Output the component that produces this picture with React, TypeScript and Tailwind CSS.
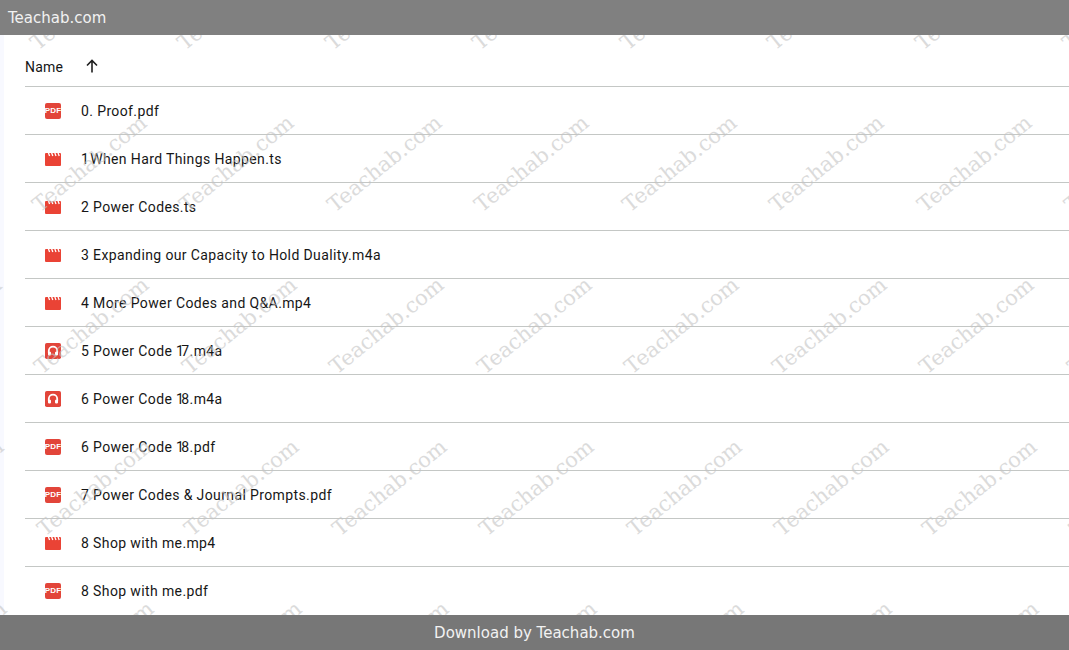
import React from "react";

const files: [string, "pdf" | "video" | "audio"][] = [
  ["0. Proof.pdf", "pdf"],
  ["1 When Hard Things Happen.ts", "video"],
  ["2 Power Codes.ts", "video"],
  ["3 Expanding our Capacity to Hold Duality.m4a", "video"],
  ["4 More Power Codes and Q&A.mp4", "video"],
  ["5 Power Code 17.m4a", "audio"],
  ["6 Power Code 18.m4a", "audio"],
  ["6 Power Code 18.pdf", "pdf"],
  ["7 Power Codes & Journal Prompts.pdf", "pdf"],
  ["8 Shop with me.mp4", "video"],
  ["8 Shop with me.pdf", "pdf"],
];

function FileName({ name }: { name: string }) {
  const parts = name.split("1");
  return (
    <>
      {parts.map((p, i) => (
        <React.Fragment key={i}>
          {i > 0 && <span className="tracking-[-2.6px]">1</span>}
          {p}
        </React.Fragment>
      ))}
    </>
  );
}

function FileIcon({ kind }: { kind: "pdf" | "video" | "audio" }) {
  if (kind === "video")
    return (
      <svg width="16" height="16" viewBox="0 0 16 16" className="block">
        <rect x="0" y="2" width="16" height="13" rx="1" fill="#ea4335" />
        <path d="M3.4 1.8 L4.6 5 M6.6 1.8 L7.8 5 M9.8 1.8 L11 5 M13 1.8 L14.2 5" stroke="#fff" strokeWidth="1.3" fill="none" />
      </svg>
    );
  if (kind === "audio")
    return (
      <svg width="16" height="16" viewBox="0 0 16 16" className="block">
        <rect width="16" height="16" rx="1.8" fill="#e2453a" />
        <path d="M3.8 10 V7.8 a4.2 4.2 0 0 1 8.4 0 V10" fill="none" stroke="#fff" strokeWidth="1.8" />
        <rect x="3" y="8.8" width="3" height="3.6" rx="0.8" fill="#fff" />
        <rect x="10" y="8.8" width="3" height="3.6" rx="0.8" fill="#fff" />
      </svg>
    );
  return (
    <div className="w-4 h-4 rounded-[2px] bg-[#e2453a] flex items-center justify-center">
      <span className="text-[8px] leading-none font-bold text-white tracking-[0.2px] [font-family:'Liberation_Sans',sans-serif]">
        PDF
      </span>
    </div>
  );
}

const marks: { x: number; y: number }[] = [];
for (let r = 0; r < 5; r++) {
  for (let c = -1; c < 8; c++) {
    marks.push({ x: 87.5 + c * 147.5 + r * 2.4, y: 2 + r * 162 });
  }
}

export default function App() {
  return (
    <div className="relative w-full h-[650px] flex flex-col overflow-hidden bg-white [font-family:Roboto,sans-serif]">
      <header className="relative z-20 h-[35px] shrink-0 bg-[#808080] flex items-center pl-2 pt-px text-[15px] text-[#f2f2f2] [font-family:'DejaVu_Sans',sans-serif]">
        Teachab.com
      </header>

      <main className="flex-1 min-h-0 border-l-4 border-[#f8f9ff] pl-[21px]">
        <div className="h-[52px] flex items-center border-b border-[#c4c7c5] pt-[13px] text-sm tracking-[0.2px] text-[#161616]">
          <span>Name</span>
          <svg width="18" height="18" viewBox="0 0 18 18" className="ml-[20px] -mt-[2px]">
            <path d="M9 15.5 V3.5 M4 8.5 L9 3.5 L14 8.5" fill="none" stroke="#1f1f1f" strokeWidth="1.6" />
          </svg>
        </div>
        {files.map(([name, kind], i) => (
          <div
            key={i}
            className={`h-[48px] flex items-center ${i < files.length - 1 ? "border-b border-[#c4c7c5]" : ""}`}
          >
            <div className="ml-[20px] w-4 shrink-0">
              <FileIcon kind={kind} />
            </div>
            <span className="ml-[20px] text-sm tracking-[0.38px] text-[#161616] whitespace-nowrap">
              <FileName name={name} />
            </span>
          </div>
        ))}
      </main>

      <footer className="relative z-20 h-[35px] shrink-0 bg-[#777777] flex items-center justify-center pt-px text-[15px] text-[#f2f2f2] [font-family:'DejaVu_Sans',sans-serif]">
        Download by Teachab.com
      </footer>

      <div className="absolute inset-0 z-10 pointer-events-none overflow-hidden">
        {marks.map((m, i) => (
          <span
            key={i}
            className="absolute whitespace-nowrap text-[21px] leading-none text-[#c4c4c4] opacity-60 -rotate-[39deg] -translate-x-1/2 -translate-y-1/2 [font-family:'DejaVu_Serif',serif]"
            style={{ left: m.x, top: m.y }}
          >
            Teachab.com
          </span>
        ))}
      </div>
    </div>
  );
}
